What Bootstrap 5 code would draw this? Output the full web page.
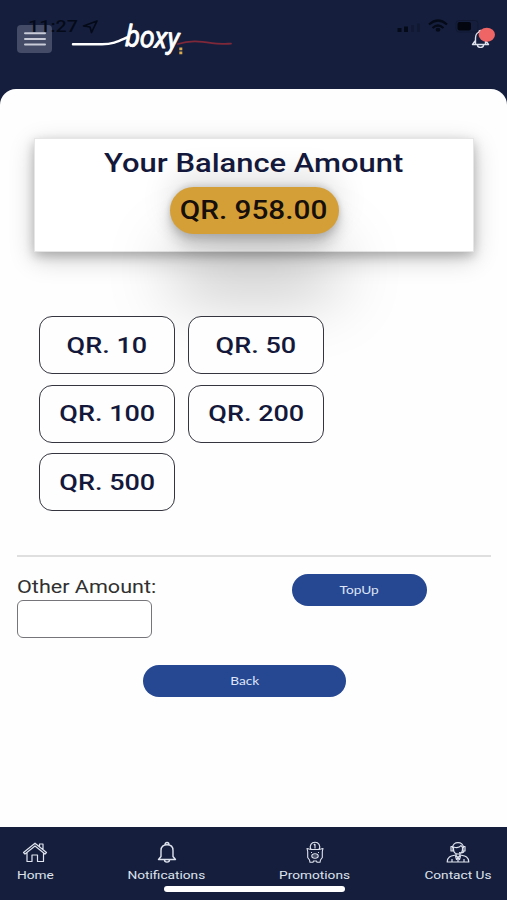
<!DOCTYPE html>
<html lang="en">
<head>
<meta charset="utf-8">
<meta name="viewport" content="width=device-width, initial-scale=1">
<title>Boxy – Top up</title>
<link href="https://cdn.jsdelivr.net/npm/bootstrap@5.3.0/dist/css/bootstrap.min.css" rel="stylesheet">
<style>
  body { font-family: Roboto, "Liberation Sans", sans-serif; background: #151f3d; width: 507px; height: 900px; overflow: hidden; }
  .topbar { height: 89px; padding: 25px 12px 0 17px; }
  .menu-btn { width: 35px; height: 28px; background: #434b66; border: 0; border-radius: 4px; }
  .brand { width: 164px; height: 50px; margin: -14px 0 0 18px; overflow: visible; }
  .bell { width: 26px; height: 26px; }
  .status { top: 17px; left: 28px; width: 460px; color: #050a18; }
  .wide { display: inline-block; white-space: nowrap; transform: scaleX(var(--sx, 1.22)); }
  .clock { --sx: 1.16; font-size: 17px; line-height: 19px; font-weight: 500; transform-origin: left; }
  .sheet { height: 738px; background: #fefefe; border-radius: 16px 16px 0 0; padding: 49px 16px 0 17px; }
  .balance { height: 113.5px; width: 440px; margin-left: 17px; padding-top: 8px; background: #fff; border: 1px solid #e6e6e6;
    box-shadow: 0 4px 10px rgba(0,0,0,.22), 0 7px 24px rgba(0,0,0,.2); }
  .balance h1 { --sx: 1.19; font-size: 26px; line-height: 32px; font-weight: 500; color: #14183a; }
  .pill { --sx: 1.18; width: 169px; height: 47px; margin-top: 8px; background: #d49f37; color: #160f0c; border-radius: 24px; font-size: 25.2px; font-weight: 500;
    box-shadow: 0 60px 66px rgba(0,0,0,.25), 0 -12px 32px rgba(0,0,0,.12), 0 4px 7px rgba(0,0,0,.12), 0 12px 15px rgba(0,0,0,.17), 0 -3px 5px rgba(0,0,0,.09); }
  .amounts { width: 284px; margin: 64.5px 0 0 22px; display: grid; grid-template-columns: 136px 136px; column-gap: 13px; row-gap: 10.5px; }
  .amount { --sx: 1.19; height: 58px; background: #fefefe; border: 1.4px solid #34353f; border-radius: 13px; color: #14183a; font-size: 22.7px; font-weight: 500; }
  .amount .wide { margin-top: 2px; }
  .rule { height: 2px; margin: 43.5px 0 17.5px; background: #dedfde; }
  .label-other { --sx: 1.16; font-size: 18.6px; line-height: 24px; margin-top: 1px; color: #303030; transform-origin: left; }
  .other-input { width: 135px; height: 38px; margin-top: 1px; border: 1.4px solid #76767a; border-radius: 6px; background: #fff; }
  .action { --sx: 1.14; height: 32px; background: #264893; color: #dfe6f7; border: 0; border-radius: 16px; font-family: Lato, Roboto, sans-serif; font-size: 12px; line-height: 32px; }
  .topup { width: 135px; margin-right: 64px; }
  .back { width: 203px; margin: 27px 0 0 126px; }
  .tabbar { --sx: 1.2; height: 73px; padding: 14px 16px 0 17px; color: #dfe3ee; }
  .tabbar a { color: inherit; font-size: 11.4px; line-height: 17px; }
  .tabbar svg { width: 26px; height: 24px; margin-bottom: 2px; }
  .w-home { width: 36px; } .w-notif { width: 77px; } .w-promo { width: 70px; } .w-contact { width: 66px; }
  .home-line { left: 164px; top: 885.5px; width: 181px; height: 6px; border-radius: 3px; background: #fff; }
</style>
<script src="https://cdn.jsdelivr.net/npm/bootstrap@5.3.0/dist/js/bootstrap.bundle.min.js"></script>
</head>
<body class="position-relative">
<header class="topbar d-flex align-items-start">
  <button class="menu-btn p-0 d-flex" aria-label="Menu">
    <svg width="35" height="28" fill="none" stroke="#c9ccd8" stroke-width="2" stroke-linecap="round"><path d="M8 8.3h20M8 14h20M8 19.6h20"/></svg>
  </button>
  <svg class="brand" viewBox="70 11 164 50" fill="none" role="img" aria-label="boxy">
    <path d="M73 44.300H102C113 44.300 119 41 127 37.500" stroke="#fff" stroke-width="2.500" stroke-linecap="round"/>
    <path d="M178 44C190 40 201 41.500 212 43.200C220 44.500 226 43.800 231 43.600" stroke="#7e2839" stroke-width="1.800" stroke-linecap="round"/>
    <text transform="translate(125 46) rotate(3)" font-family="Roboto, sans-serif" font-style="italic" font-weight="400" font-size="30" fill="#fff" stroke="#fff" stroke-width=".9" stroke-linejoin="round" textLength="54" lengthAdjust="spacingAndGlyphs">boxy</text>
    <path d="M179.300 47.500h3v2.800h-3zM179.300 51.500h3v2.800h-3z" fill="#d9ab4c"/>
  </svg>
  <svg class="bell ms-auto" viewBox="469 25 26 26" fill="none">
    <path d="M475.500 44V38c0-4 2.500-6 5-6s5 2 5 6v6M472.500 44.500h16l-2.500-3.500M472.500 44.500l2.500-3.500M477.500 45.500c.5 2.500 5.500 2.500 6 0M479 31.500c0-1.500 3-1.500 3 0" stroke="#dce0ea" stroke-width="1.400" stroke-linecap="round" stroke-linejoin="round"/>
    <ellipse cx="486.800" cy="34.700" rx="8.200" ry="7" fill="#ef6464"/>
  </svg>
</header>
<div class="status position-absolute d-flex">
  <span class="wide clock">11:27</span>
  <svg width="460" height="22" class="position-absolute top-0 start-0" viewBox="28 17 460 22" fill="none">
    <path d="M83.500 26L97 21L91.500 32.500L90 27Z" stroke="#050a18" stroke-width="1.700" stroke-linejoin="round"/>
    <path d="M399.500 28v4M406 26.500v5.500" stroke="#050a18" stroke-width="4"/>
    <path d="M412.500 25v7M418.500 23.500v8.500" stroke="#111932" stroke-width="3"/>
    <path d="M429 24.500Q438 16.500 447 24.500M432.500 28Q438 23 443.500 28" stroke="#050a18" stroke-width="2.200"/>
    <ellipse cx="438" cy="29.800" rx="2.400" ry="2" fill="#050a18"/>
    <rect x="456" y="20.500" width="22" height="11.500" rx="3" stroke="#111932"/>
    <rect x="457.500" y="22" width="13.500" height="8.500" rx="2" fill="#03060f"/>
  </svg>
</div>
<main class="sheet">
  <section class="balance d-flex flex-column align-items-center">
    <h1 class="m-0"><span class="wide">Your Balance Amount</span></h1>
    <div class="pill d-flex align-items-center justify-content-center"><span class="wide">QR. 958.00</span></div>
  </section>
  <div class="amounts">
    <button class="amount p-0"><span class="wide">QR. 10</span></button>
    <button class="amount p-0"><span class="wide">QR. 50</span></button>
    <button class="amount p-0"><span class="wide">QR. 100</span></button>
    <button class="amount p-0"><span class="wide">QR. 200</span></button>
    <button class="amount p-0"><span class="wide">QR. 500</span></button>
  </div>
  <div class="rule"></div>
  <div class="d-flex justify-content-between align-items-start">
    <div class="d-flex flex-column align-items-start">
      <label class="wide label-other" for="other">Other Amount:</label>
      <input id="other" class="other-input" type="text">
    </div>
    <button class="action topup p-0"><span class="wide">TopUp</span></button>
  </div>
  <button class="action back d-block p-0"><span class="wide">Back</span></button>
</main>
<nav class="tabbar d-flex justify-content-between align-items-start">
  <a href="#" class="w-home d-flex flex-column align-items-center text-decoration-none">
    <svg viewBox="0 0 26 24" fill="none" stroke="currentColor" stroke-width="1.200" stroke-linejoin="round"><path d="M1.500 11.500L13 2.200L24.500 11.500L23 13L13 5L3 13ZM5 11.500V20.500H10V14H15.500V20.500H21.500V11.500M17.500 5.500V3H21V8.500"/></svg>
    <span class="wide">Home</span></a>
  <a href="#" class="w-notif d-flex flex-column align-items-center text-decoration-none">
    <svg viewBox="0 0 26 24" fill="none" stroke="currentColor" stroke-width="1.400" stroke-linejoin="round"><path d="M4.500 18.500L7 15.500V9.500C7 5.500 9.500 3.800 13 3.800S19 5.500 19 9.500V15.500L21.500 18.500ZM11 3.800C11 .8 15 .8 15 3.800M10.500 19C10.500 21.800 15.500 21.800 15.500 19"/></svg>
    <span class="wide">Notifications</span></a>
  <a href="#" class="w-promo d-flex flex-column align-items-center text-decoration-none">
    <svg viewBox="0 0 26 24" fill="none" stroke="currentColor" stroke-width="1.100" stroke-linejoin="round"><path d="M9 8.200C7 4.500 9.500 1.300 13 1.300S19 4.500 17 8.200M13 3v4.500M11.800 4L13 3M5 7.500L9 8.500H17L21 7.500L20.300 10.500V16.500L18.500 19L18 21.300H15L14.500 20H11.500L11 21.300H8L7.500 19L5.700 16.500V10.500Z"/><ellipse cx="13" cy="15" rx="3.200" ry="2.200"/><path d="M12 14.500v1M14 14.500v1M9 11.500h1M16 11.500h1"/></svg>
    <span class="wide">Promotions</span></a>
  <a href="#" class="w-contact d-flex flex-column align-items-center text-decoration-none">
    <svg viewBox="0 0 26 24" fill="none" stroke="currentColor" stroke-width="1.200" stroke-linejoin="round"><path d="M7.500 7C7.500 -.2 18.500 -.2 18.500 7M7.500 5.500H6V10H8V5.500M18 5.500V10H20V5.500H18.500M8.500 6C12 7 15 6 16 4.500L17.500 6.500V8.500C17 14.500 9 14.500 8.500 8.500ZM19 10C19 12 16.500 12 14 11.700M11 12.500V14.500L13 16.500L15 14.500V12.500M11 14C6 15 2.500 15 2.200 21H23.800C23.500 15 20 15 15 14M13 16.500V21M10.500 15L11.500 18.500L13 16.500L14.500 18.500L15.500 15M7 18V21M19 18V21"/></svg>
    <span class="wide">Contact Us</span></a>
</nav>
<div class="home-line position-absolute"></div>
</body>
</html>
